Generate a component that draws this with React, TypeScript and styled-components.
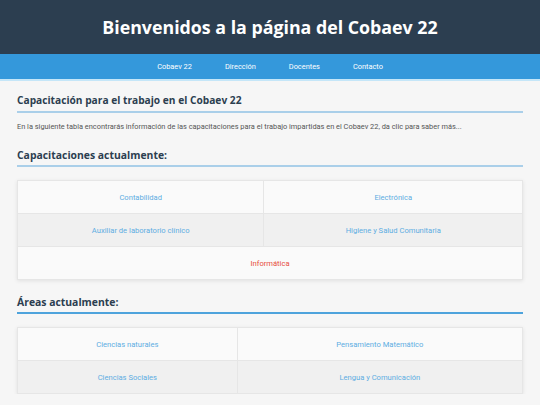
import React from "react";
import styled, { createGlobalStyle } from "styled-components";

const Global = createGlobalStyle`
  html, body { margin: 0; padding: 0; background: #f6f6f6; }
  body { font-family: Roboto, "Liberation Sans", sans-serif; }
  * { box-sizing: border-box; }
`;

const Header = styled.header`
  height: 54px;
  background: #2c3e50;
  display: flex;
  align-items: center;
  justify-content: center;
`;

const Title = styled.h1`
  margin: 0;
  color: #ffffff;
  font-family: "Open Sans", sans-serif;
  font-weight: 700;
  font-size: 17.8px;
`;

const Nav = styled.nav`
  height: 27px;
  background: #3498db;
  border-bottom: 2px solid #c5e6f8;
  display: flex;
  justify-content: center;
  align-items: center;
  gap: 33px;
`;

const NavLink = styled.a`
  color: #ffffff;
  font-size: 7.4px;
  text-decoration: none;
  font-family: Roboto, sans-serif;
`;

const Main = styled.main`
  padding: 0 17px;
`;

const SectionTitle = styled.h2<{ $line: string; $size: number; $first?: boolean }>`
  margin: ${(p) => (p.$first ? "11px" : "14px")} 0 0;
  font-family: "Open Sans", sans-serif;
  font-weight: 700;
  font-size: ${(p) => p.$size}px;
  line-height: 16px;
  color: #2c3e50;
  padding-bottom: ${(p) => (p.$first ? "3px" : "2px")};
  border-bottom: 2px solid ${(p) => p.$line};
`;

const Intro = styled.p`
  margin: 8px 0 0;
  font-size: 7.4px;
  line-height: 12px;
  color: #555555;
`;

const Table = styled.table`
  width: 100%;
  margin-top: 13px;
  border-collapse: collapse;
  table-layout: fixed;
  background: #fafafa;
  box-shadow: 0 1px 4px rgba(0, 0, 0, 0.09);
`;

const Col = styled.col<{ $w: string }>`
  width: ${(p) => p.$w};
`;

const Row = styled.tr<{ $shade?: boolean }>`
  background: ${(p) => (p.$shade ? "#f0f0f0" : "#fafafa")};
`;

const Cell = styled.td<{ $accent?: boolean }>`
  height: 33px;
  padding: 0 8px;
  text-align: center;
  border: 1px solid #e6e6e6;
  font-size: 7.6px;
  color: ${(p) => (p.$accent ? "#e74c3c" : "#5dade2")};
  font-family: Roboto, sans-serif;
`;

export default function App() {
  return (
    <>
      <Global />
      <Header>
        <Title>Bienvenidos a la página del Cobaev 22</Title>
      </Header>
      <Nav>
        <NavLink href="#">Cobaev 22</NavLink>
        <NavLink href="#">Dirección</NavLink>
        <NavLink href="#">Docentes</NavLink>
        <NavLink href="#">Contacto</NavLink>
      </Nav>
      <Main>
        <SectionTitle $line="#aacfe9" $size={10.2} $first>
          Capacitación para el trabajo en el Cobaev 22
        </SectionTitle>
        <Intro>
          En la siguiente tabla encontrarás información de las capacitaciones para el trabajo impartidas en el Cobaev 22, da clic para saber más...
        </Intro>
        <SectionTitle $line="#aacfe9" $size={10.4}>
          Capacitaciones actualmente:
        </SectionTitle>
        <Table>
          <colgroup>
            <Col $w="48.8%" />
            <Col $w="51.2%" />
          </colgroup>
          <tbody>
            <Row>
              <Cell>Contabilidad</Cell>
              <Cell>Electrónica</Cell>
            </Row>
            <Row $shade>
              <Cell>Auxiliar de laboratorio clínico</Cell>
              <Cell>Higiene y Salud Comunitaria</Cell>
            </Row>
            <Row>
              <Cell colSpan={2} $accent>Informática</Cell>
            </Row>
          </tbody>
        </Table>
        <SectionTitle $line="#4ea3dc" $size={10.4}>
          Áreas actualmente:
        </SectionTitle>
        <Table>
          <colgroup>
            <Col $w="43.5%" />
            <Col $w="56.5%" />
          </colgroup>
          <tbody>
            <Row>
              <Cell>Ciencias naturales</Cell>
              <Cell>Pensamiento Matemático</Cell>
            </Row>
            <Row $shade>
              <Cell>Ciencias Sociales</Cell>
              <Cell>Lengua y Comunicación</Cell>
            </Row>
          </tbody>
        </Table>
      </Main>
    </>
  );
}
